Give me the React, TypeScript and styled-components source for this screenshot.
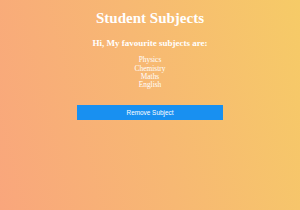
import { FC } from 'react'

import styled, { createGlobalStyle } from 'styled-components'

const GlobalStyle = createGlobalStyle`
	html, body {
		margin: 0;
		padding: 0;
	}
	body {
		font-family: 'Liberation Serif', 'Times New Roman', serif;
	}
`

const Page = styled.div`
	min-height: 210px;
	box-sizing: border-box;
	padding-top: 10px;
	background: linear-gradient(75deg, #f9a67c 0%, #f7b873 50%, #f6cb67 100%);
	display: flex;
	flex-direction: column;
	align-items: center;
	color: #fff;
	text-align: center;
`

const Title = styled.h1`
	margin: 0;
	font-size: 15px;
	font-weight: bold;
	line-height: 16.6px;
`

const Subtitle = styled.h3`
	margin: 11.4px 0 0;
	font-size: 9px;
	font-weight: bold;
	line-height: 10px;
`

const SubjectList = styled.ul`
	margin: 8.5px 0 0;
	padding: 0;
	list-style: none;
	font-size: 7.4px;
	line-height: 8.3px;
`

const RemoveButton = styled.button`
	margin-top: 15px;
	width: 146px;
	height: 15.5px;
	padding: 0;
	border: none;
	background: #1890f1;
	color: #fff;
	font-family: 'Liberation Sans', Arial, sans-serif;
	font-size: 6.4px;
	cursor: pointer;
`

const subjects = ['Physics', 'Chemistry', 'Maths', 'English']

const App: FC = () => {
	return (
		<Page>
			<GlobalStyle />
			<Title>Student Subjects</Title>
			<Subtitle>Hi, My favourite subjects are:</Subtitle>
			<SubjectList>
				{subjects.map((s) => (
					<li key={s}>{s}</li>
				))}
			</SubjectList>
			<RemoveButton>Remove Subject</RemoveButton>
		</Page>
	)
}

export default App
